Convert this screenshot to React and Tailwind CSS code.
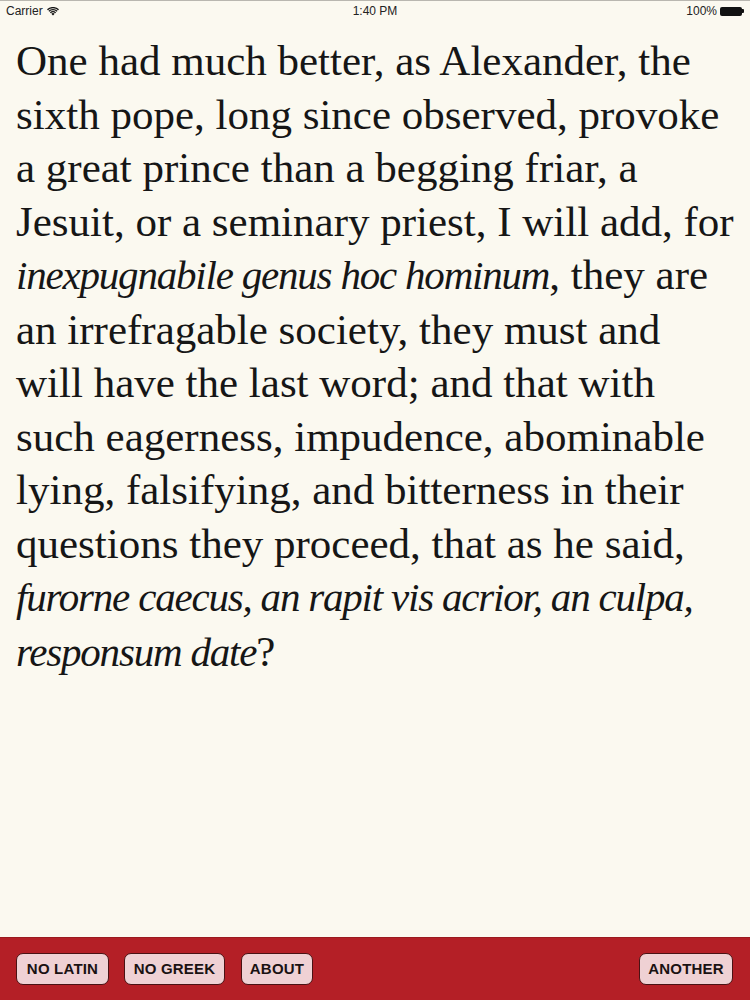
import React from "react";

const lines = [
  { t: "One had much better, as Alexander, the" },
  { t: "sixth pope, long since observed, provoke" },
  { t: "a great prince than a begging friar, a" },
  { t: "Jesuit, or a seminary priest, I will add, for" },
  { parts: [{ i: true, t: "inexpugnabile genus hoc hominum" }, { t: ", they are" }] },
  { t: "an irrefragable society, they must and" },
  { t: "will have the last word; and that with" },
  { t: "such eagerness, impudence, abominable" },
  { t: "lying, falsifying, and bitterness in their" },
  { t: "questions they proceed, that as he said," },
  { parts: [{ i: true, t: "furorne caecus, an rapit vis acrior, an culpa," }] },
  { parts: [{ i: true, t: "responsum date" }, { t: "?" }] },
];

function Wifi() {
  return (
    <svg width="12" height="9" viewBox="0 0 12 9" className="ml-[4px]">
      <path d="M6 8.6 L4.3 6.7 A2.6 2.6 0 0 1 7.7 6.7 Z" fill="#111" />
      <path d="M2.9 5.3 A4.6 4.6 0 0 1 9.1 5.3 L8.2 6.2 A3.3 3.3 0 0 0 3.8 6.2 Z" fill="#111" />
      <path d="M1.4 3.8 A6.7 6.7 0 0 1 10.6 3.8 L9.7 4.7 A5.4 5.4 0 0 0 2.3 4.7 Z" fill="#111" />
      <path d="M0 2.3 A8.8 8.8 0 0 1 12 2.3 L11.1 3.2 A7.5 7.5 0 0 0 0.9 3.2 Z" fill="#111" />
    </svg>
  );
}

function Btn({ children, w }) {
  return (
    <button
      className={`${w} h-[32px] rounded-[7px] bg-[#efd1d4] border-[1.5px] border-[#4a1214] text-[15px] font-bold text-[#1a1212] tracking-[0.2px] font-['Liberation_Sans',sans-serif] flex items-center justify-center`}
    >
      {children}
    </button>
  );
}

export default function App() {
  return (
    <div className="w-[750px] h-[1000px] bg-[#fbf9f0] flex flex-col overflow-hidden">
      <div className="h-[1px] bg-[#b9b7b0]" />
      <div className="h-[20px] flex items-center justify-between px-[6px] text-[12px] text-[#222] font-['Liberation_Sans',sans-serif] relative">
        <div className="flex items-center">
          <span>Carrier</span>
          <Wifi />
        </div>
        <div className="absolute left-0 right-0 text-center">1:40 PM</div>
        <div className="flex items-center">
          <span>100%</span>
          <div className="ml-[3px] w-[22px] h-[9px] bg-[#111] rounded-[2px]" />
          <div className="w-[2px] h-[4px] bg-[#111] rounded-r-[1px]" />
        </div>
      </div>
      <div className="flex-1 pl-[16px] pt-[13px] font-['Liberation_Serif',serif] text-[#161616] text-[43px] leading-[53.5px]">
        {lines.map((l, idx) => (
          <div key={idx} className="whitespace-nowrap">
            {l.t
              ? l.t
              : l.parts.map((p, j) =>
                  p.i ? (
                    <i key={j} className="text-[41px] tracking-[-1.2px]">{p.t}</i>
                  ) : (
                    <span key={j}>{p.t}</span>
                  )
                )}
          </div>
        ))}
      </div>
      <div className="h-[63px] bg-[#b41f26] border-t border-[#9a1a1f] flex items-center justify-between pl-[16px] pr-[17px]">
        <div className="flex items-center">
          <Btn w="w-[93px]">NO LATIN</Btn>
          <div className="w-[15px]" />
          <Btn w="w-[101px]">NO GREEK</Btn>
          <div className="w-[16px]" />
          <Btn w="w-[72px]">ABOUT</Btn>
        </div>
        <Btn w="w-[94px]">ANOTHER</Btn>
      </div>
    </div>
  );
}
